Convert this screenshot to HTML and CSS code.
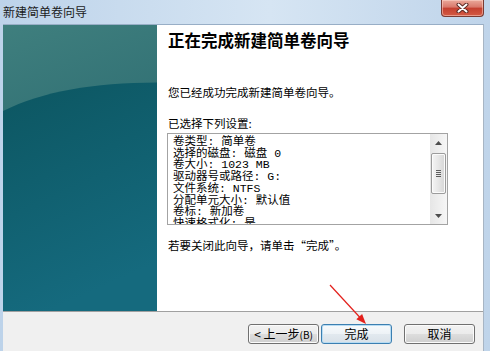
FILE: index.html
```html
<!DOCTYPE html>
<html lang="zh-CN">
<head>
    <meta charset="UTF-8">
    <meta name="viewport" content="width=device-width, initial-scale=1.0">
    <title>新建简单卷向导</title>
    <link rel="stylesheet" href="styles.css">
</head>
<body>
    <div class="window">
        <div class="titlebar">
            <span class="title">新建简单卷向导</span>
            <button class="close" type="button" aria-label="关闭">
                <svg width="13" height="10" viewBox="0 0 13 10">
                    <path d="M2.5 1.5 L10.5 8.5 M10.5 1.5 L2.5 8.5" stroke="#5a2a24" stroke-width="4" stroke-linecap="round"/>
                    <path d="M2.5 1.5 L10.5 8.5 M10.5 1.5 L2.5 8.5" stroke="#fff" stroke-width="2" stroke-linecap="round"/>
                </svg>
            </button>
        </div>

        <div class="client">
            <div class="main">
                <!-- wizard side art -->
                <div class="side">
                    <svg width="154" height="286" viewBox="0 0 154 286">
                        <defs>
                            <linearGradient id="lower" x1="0" y1="0" x2="0.3" y2="1">
                                <stop offset="0" stop-color="#0c5661"/>
                                <stop offset="1" stop-color="#156a7e"/>
                            </linearGradient>
                        </defs>
                        <path d="M0 86 C40 66 90 58 154 57.5 L154 286 L0 286 Z" fill="url(#lower)"/>
                    </svg>
                </div>

                <div class="content">
                    <h1>正在完成新建简单卷向导</h1>
                    <p class="intro">您已经成功完成新建简单卷向导。</p>
                    <p class="label">已选择下列设置:</p>

                    <div class="listbox">
                        <div class="lines">
                            <div>卷类型: 简单卷</div>
                            <div>选择的磁盘: 磁盘 0</div>
                            <div>卷大小: 1023 MB</div>
                            <div>驱动器号或路径: G:</div>
                            <div>文件系统: NTFS</div>
                            <div>分配单元大小: 默认值</div>
                            <div>卷标: 新加卷</div>
                            <div>快速格式化: 是</div>
                        </div>
                        <div class="scrollbar">
                            <div class="sb-btn">
                                <svg width="7" height="4" viewBox="0 0 7 4"><path d="M0 4 L3.5 0 L7 4 Z" fill="#4d4d4d"/></svg>
                            </div>
                            <div class="sb-track">
                                <div class="sb-thumb">
                                    <span></span><span></span><span></span><span></span>
                                </div>
                            </div>
                            <div class="sb-btn">
                                <svg width="7" height="4" viewBox="0 0 7 4"><path d="M0 0 L7 0 L3.5 4 Z" fill="#4d4d4d"/></svg>
                            </div>
                        </div>
                    </div>

                    <p class="hint">若要关闭此向导，请单击“完成”。</p>
                </div>
            </div>

            <div class="footer">
                <button class="btn" type="button">&lt; 上一步<span class="key">(B)</span></button>
                <button class="btn btn-default" type="button">完成</button>
                <button class="btn btn-cancel" type="button">取消</button>
            </div>
        </div>

        <!-- red annotation arrow -->
        <svg class="annotation" width="490" height="351" viewBox="0 0 490 351">
            <path d="M330 285 L360 317.5" stroke="#e3201c" stroke-width="1.2"/>
            <polygon points="366,324 356.3,319.3 362.1,313.9" fill="#e3201c"/>
        </svg>
    </div>
</body>
</html>
```

FILE: styles.css
```css
* {
    box-sizing: border-box;
}
body {
    margin: 0;
    font-family: "Noto Sans CJK SC", sans-serif;
    font-size: 12px;
    color: #000;
}
.window {
    position: relative;
    width: 490px;
    height: 351px;
    display: flex;
    flex-direction: column;
    overflow: hidden;
    background: linear-gradient(to right, #bdd3ea, #d6e5f3 55%, #bfd4ea);
}

/* title bar */
.titlebar {
    height: 24px;
    display: flex;
    justify-content: space-between;
    align-items: flex-start;
    padding-left: 3px;
}
.title {
    margin-top: 4px;
    font-size: 12px;
    line-height: 16px;
    color: #1b1b1b;
}
.close {
    width: 43px;
    height: 17px;
    margin-right: 6px;
    padding: 0;
    display: flex;
    align-items: center;
    justify-content: center;
    border: 1px solid #7a3b33;
    border-top: none;
    border-radius: 0 0 4px 4px;
    background: linear-gradient(#eaa99a, #d9786a 45%, #c4402f 50%, #d35a44);
    box-shadow: inset 0 0 0 1px rgba(255, 220, 210, 0.5);
}

/* client area */
.client {
    flex: 1;
    margin: 0 6px 0 3px;
    border-top: 1px solid #98aec6;
    border-right: 1px solid #a7b5c4;
    background: #fff;
    display: flex;
    flex-direction: column;
}
.main {
    height: 286px;
    display: flex;
}
.side {
    width: 154px;
    background: linear-gradient(160deg, #3f7f7e, #2b6a70 60%, #276670);
}
.side svg {
    display: block;
}
.content {
    flex: 1;
    padding: 5px 0 0 11px;
}
h1 {
    margin: 0;
    font-size: 16.5px;
    line-height: 20px;
    font-weight: bold;
}
.content p {
    margin: 0;
    font-size: 11.5px;
    line-height: 14px;
}
.intro {
    padding-top: 35px;
}
.label {
    padding-top: 17px;
}
.hint {
    padding-top: 13px;
}

/* settings list */
.listbox {
    width: 281px;
    height: 92px;
    margin: 3px 0 0 -1px;
    border: 1px solid #a3a3a3;
    display: flex;
}
.lines {
    flex: 1;
    overflow: hidden;
    padding: 2px 0 0 5px;
    font-family: "Liberation Mono", "Noto Sans CJK SC", monospace;
    font-size: 11.5px;
    line-height: 11.7px;
    white-space: nowrap;
}
.scrollbar {
    width: 17px;
    display: flex;
    flex-direction: column;
    background: linear-gradient(to right, #e6e6e6, #f6f6f6);
}
.sb-btn {
    height: 17px;
    display: flex;
    align-items: center;
    justify-content: center;
}
.sb-track {
    flex: 1;
    padding: 2px 1px 0;
}
.sb-thumb {
    height: 41px;
    border: 1px solid #9c9c9c;
    border-radius: 2px;
    background: linear-gradient(to right, #f5f5f5, #e6e6e6 50%, #d6d6d6);
    box-shadow: inset 0 0 0 1px #fbfbfb;
    display: flex;
    flex-direction: column;
    align-items: center;
    justify-content: center;
    gap: 1px;
}
.sb-thumb span {
    width: 5px;
    height: 1px;
    background: #5d5d5d;
}

/* buttons */
.footer {
    flex: 1;
    border-top: 1px solid #a0a0a0;
    background: #f0f0f0;
    display: flex;
    justify-content: flex-end;
    align-items: flex-start;
    padding: 12px 8px 0 0;
}
.btn {
    width: 71px;
    height: 20px;
    padding: 0;
    font-family: "Noto Sans CJK SC", sans-serif;
    font-size: 12px;
    line-height: 16px;
    color: #000;
    border: 1px solid #707070;
    border-radius: 3px;
    background: linear-gradient(#f2f2f2, #ebebeb 50%, #dddddd 50%, #cfcfcf);
    box-shadow: inset 0 0 0 1px #fbfbfb;
}
.key {
    font-size: 10px;
}
.btn-default {
    margin-left: 2px;
    border-color: #3c7fb1;
    background: linear-gradient(#f7fafc, #edf2f6 50%, #e2e9ef 50%, #d9e1e8);
    box-shadow: inset 0 0 0 1px #b7dcf3;
}
.btn-cancel {
    margin-left: 12px;
}

.annotation {
    position: absolute;
    left: 0;
    top: 0;
    pointer-events: none;
}
```
